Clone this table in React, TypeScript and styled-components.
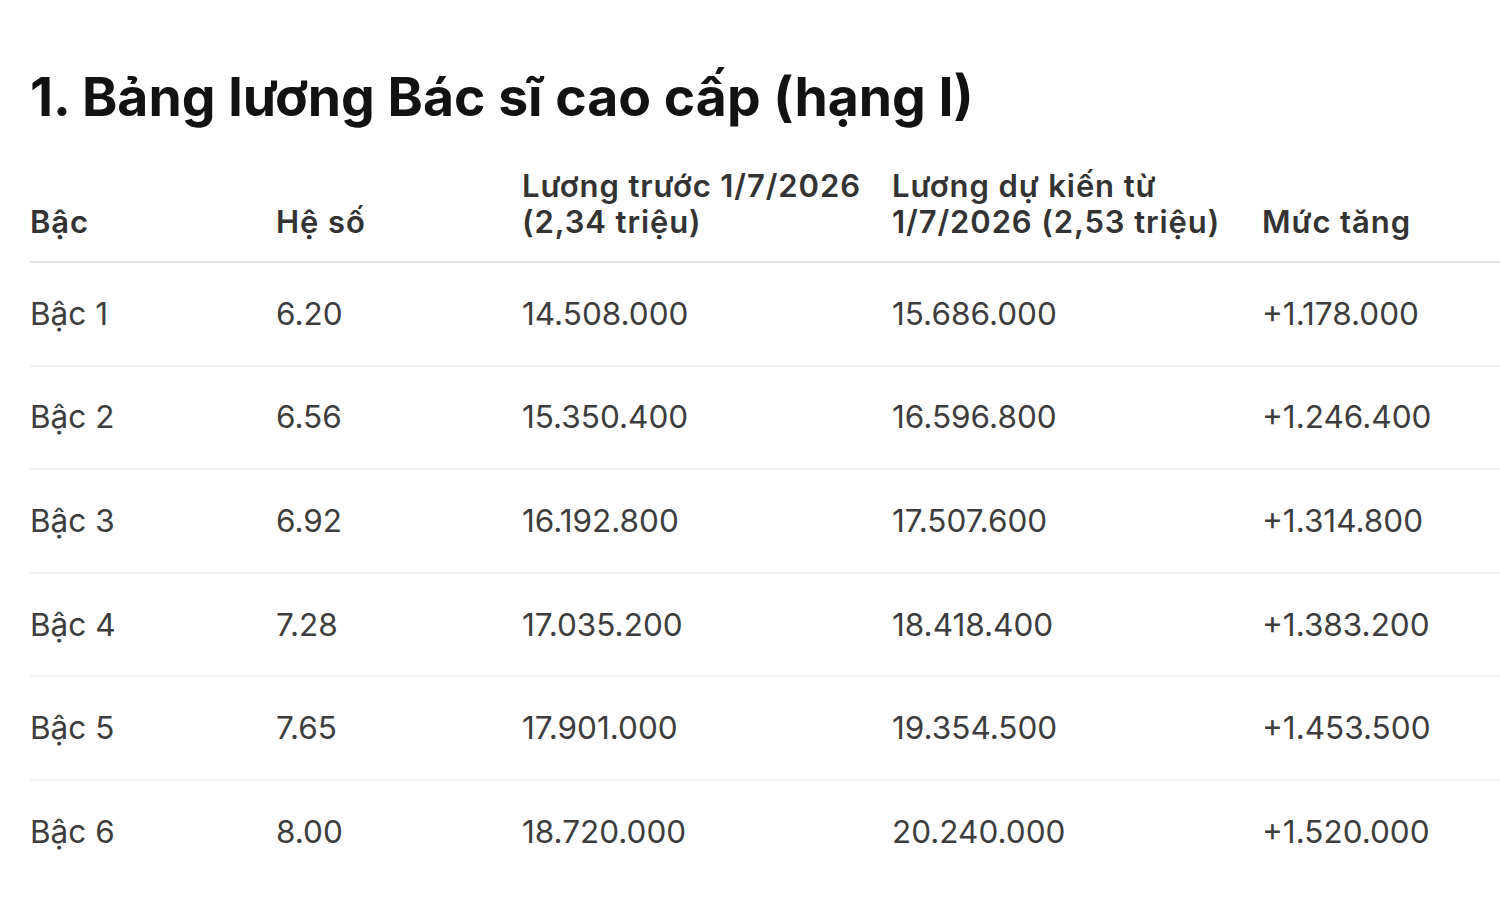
import * as React from 'react'
import styled, { createGlobalStyle } from 'styled-components'

const GlobalStyle = createGlobalStyle`
  html, body {
    margin: 0;
    padding: 0;
    background: #ffffff;
  }
  body {
    font-family: Inter, "Noto Sans", "Liberation Sans", sans-serif;
  }
`

const Page = styled.div`
  padding: 62px 0 0 30px;
  width: 1470px;
`

const Title = styled.h1`
  margin: 0;
  font-size: 53.5px;
  line-height: 70px;
  font-weight: 700;
  color: #121212;
  letter-spacing: 0;
`

const Table = styled.table`
  border-collapse: collapse;
  width: 1470px;
  table-layout: fixed;
`

const HeadCell = styled.th<{ $width?: number }>`
  width: ${(p) => (p.$width ? `${p.$width}px` : 'auto')};
  padding: 36px 0 21px;
  text-align: left;
  vertical-align: bottom;
  font-size: 31px;
  line-height: 36px;
  font-weight: 600;
  letter-spacing: 0.9px;
  color: #333333;
  white-space: nowrap;
  border-bottom: 2px solid #e2e2e2;
`

const Row = styled.tr`
  & + & td {
    border-top: 2px solid #f1f1f1;
  }
`

const Cell = styled.td`
  padding: 0;
  height: 101.6px;
  text-align: left;
  vertical-align: middle;
  font-size: 31.5px;
  line-height: 36px;
  font-weight: 400;
  color: #3d3d3d;
  white-space: nowrap;
`

type Level = {
  name: string
  coef: string
  before: string
  after: string
  diff: string
}

const levels: Level[] = [
  { name: 'Bậc 1', coef: '6.20', before: '14.508.000', after: '15.686.000', diff: '+1.178.000' },
  { name: 'Bậc 2', coef: '6.56', before: '15.350.400', after: '16.596.800', diff: '+1.246.400' },
  { name: 'Bậc 3', coef: '6.92', before: '16.192.800', after: '17.507.600', diff: '+1.314.800' },
  { name: 'Bậc 4', coef: '7.28', before: '17.035.200', after: '18.418.400', diff: '+1.383.200' },
  { name: 'Bậc 5', coef: '7.65', before: '17.901.000', after: '19.354.500', diff: '+1.453.500' },
  { name: 'Bậc 6', coef: '8.00', before: '18.720.000', after: '20.240.000', diff: '+1.520.000' },
]

export default function App() {
  return (
    <>
      <GlobalStyle />
      <Page>
        <Title>1. Bảng lương Bác sĩ cao cấp (hạng I)</Title>
        <Table>
          <thead>
            <tr>
              <HeadCell $width={246}>Bậc</HeadCell>
              <HeadCell $width={246}>Hệ số</HeadCell>
              <HeadCell $width={370}>
                Lương trước 1/7/2026
                <br />
                (2,34 triệu)
              </HeadCell>
              <HeadCell $width={370}>
                Lương dự kiến từ
                <br />
                1/7/2026 (2,53 triệu)
              </HeadCell>
              <HeadCell>Mức tăng</HeadCell>
            </tr>
          </thead>
          <tbody>
            {levels.map((l) => (
              <Row key={l.name}>
                <Cell>{l.name}</Cell>
                <Cell>{l.coef}</Cell>
                <Cell>{l.before}</Cell>
                <Cell>{l.after}</Cell>
                <Cell>{l.diff}</Cell>
              </Row>
            ))}
          </tbody>
        </Table>
      </Page>
    </>
  )
}
